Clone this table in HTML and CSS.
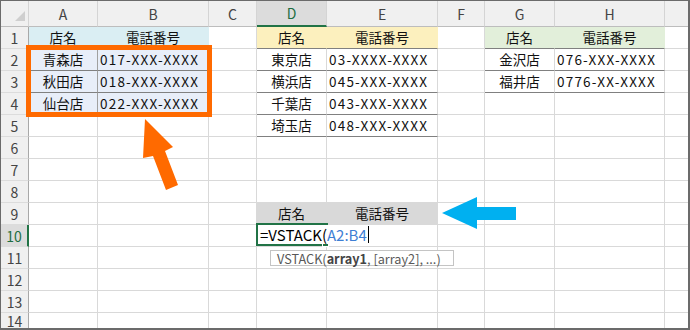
FILE: index.html
```html
<!DOCTYPE html>
<html lang="ja">
<head>
<meta charset="utf-8">
<title>VSTACK</title>
<link rel="stylesheet" href="styles.css">
</head>
<body>
<div class="sheet">
  <div class="grid">
    <div class="corner"><span class="tri"></span></div>
    <div class="ch">A</div><div class="ch">B</div><div class="ch">C</div><div class="ch act">D</div><div class="ch">E</div><div class="ch">F</div><div class="ch">G</div><div class="ch">H</div><div class="ch last"></div>

    <div class="rh">1</div>
    <div class="c ctr f-aqua">店名</div><div class="c ctr f-aqua">電話番号</div><div class="c"></div>
    <div class="c ctr f-yel bb">店名</div><div class="c ctr f-yel bb">電話番号</div><div class="c"></div>
    <div class="c ctr f-grn bb">店名</div><div class="c ctr f-grn bb">電話番号</div><div class="c last"></div>

    <div class="rh">2</div>
    <div class="c ctr f-sel bb vr">青森店</div><div class="c num f-sel bb">017-XXX-XXXX</div><div class="c"></div>
    <div class="c ctr bb">東京店</div><div class="c num bb">03-XXXX-XXXX</div><div class="c"></div>
    <div class="c ctr bb">金沢店</div><div class="c num bb">076-XXX-XXXX</div><div class="c last"></div>

    <div class="rh">3</div>
    <div class="c ctr f-sel bb vr">秋田店</div><div class="c num f-sel bb">018-XXX-XXXX</div><div class="c"></div>
    <div class="c ctr bb">横浜店</div><div class="c num bb">045-XXX-XXXX</div><div class="c"></div>
    <div class="c ctr bb">福井店</div><div class="c num bb">0776-XX-XXXX</div><div class="c last"></div>

    <div class="rh">4</div>
    <div class="c ctr f-sel bb vr">仙台店</div><div class="c num f-sel bb">022-XXX-XXXX</div><div class="c"></div>
    <div class="c ctr bb">千葉店</div><div class="c num bb">043-XXX-XXXX</div><div class="c"></div>
    <div class="c"></div><div class="c"></div><div class="c last"></div>

    <div class="rh">5</div>
    <div class="c"></div><div class="c"></div><div class="c"></div>
    <div class="c ctr bb">埼玉店</div><div class="c num bb">048-XXX-XXXX</div><div class="c"></div>
    <div class="c"></div><div class="c"></div><div class="c last"></div>

    <div class="rh">6</div>
    <div class="c"></div><div class="c"></div><div class="c"></div><div class="c"></div><div class="c"></div><div class="c"></div><div class="c"></div><div class="c"></div><div class="c last"></div>

    <div class="rh">7</div>
    <div class="c"></div><div class="c"></div><div class="c"></div><div class="c"></div><div class="c"></div><div class="c"></div><div class="c"></div><div class="c"></div><div class="c last"></div>

    <div class="rh">8</div>
    <div class="c"></div><div class="c"></div><div class="c"></div><div class="c"></div><div class="c"></div><div class="c"></div><div class="c"></div><div class="c"></div><div class="c last"></div>

    <div class="rh">9</div>
    <div class="c"></div><div class="c"></div><div class="c"></div>
    <div class="c ctr f-gray">店名</div><div class="c ctr f-gray">電話番号</div>
    <div class="c"></div><div class="c"></div><div class="c"></div><div class="c last"></div>

    <div class="rh act">10</div>
    <div class="c"></div><div class="c"></div><div class="c"></div><div class="c"></div><div class="c"></div><div class="c"></div><div class="c"></div><div class="c"></div><div class="c last"></div>

    <div class="rh">11</div>
    <div class="c"></div><div class="c"></div><div class="c"></div><div class="c"></div><div class="c"></div><div class="c"></div><div class="c"></div><div class="c"></div><div class="c last"></div>

    <div class="rh">12</div>
    <div class="c"></div><div class="c"></div><div class="c"></div><div class="c"></div><div class="c"></div><div class="c"></div><div class="c"></div><div class="c"></div><div class="c last"></div>

    <div class="rh">13</div>
    <div class="c"></div><div class="c"></div><div class="c"></div><div class="c"></div><div class="c"></div><div class="c"></div><div class="c"></div><div class="c"></div><div class="c last"></div>

    <div class="rh end">14</div>
    <div class="c end"></div><div class="c end"></div><div class="c end"></div><div class="c end"></div><div class="c end"></div><div class="c end"></div><div class="c end"></div><div class="c end"></div><div class="c end last"></div>
  </div>

  <div class="range-box"></div>

  <div class="active-cell"><span class="handle"></span></div>
  <div class="editor">=VSTACK(<span class="ref">A2:B4</span><span class="caret"></span></div>
  <div class="tip">VSTACK(<b>array1</b>, [array2], ...)</div>

  <svg class="arrow-up" width="690" height="330" viewBox="0 0 690 330">
    <polygon points="145,119 173,147 165,151 178,185 166,190 153,156 143,158" fill="#ff6a00"/>
  </svg>
  <svg class="arrow-left" width="690" height="330" viewBox="0 0 690 330">
    <polygon points="442,213 477,197 477,207 516,207 516,220 477,220 477,229" fill="#00b0f0"/>
  </svg>
</div>
</body>
</html>
```

FILE: styles.css
```css
html, body {
  margin: 0;
  padding: 0;
  background: #fff;
}

.sheet {
  position: relative;
  width: 690px;
  height: 330px;
  box-sizing: border-box;
  border-style: solid;
  border-color: #6b6b6b;
  border-width: 1px 2px 2px 1px;
  overflow: hidden;
  background: #fff;
  font-family: "Noto Sans CJK JP", "Noto Sans", sans-serif;
}

.grid {
  display: grid;
  grid-template-columns: 28px 69px 111px 48px 70px 111px 47px 70px 110px 1fr;
  grid-template-rows: 26px repeat(13, 22px) 1fr;
  height: 100%;
}

.grid > div {
  box-sizing: border-box;
  border-right: 1px solid #d9d9d9;
  border-bottom: 1px solid #d9d9d9;
  display: flex;
  align-items: center;
  white-space: nowrap;
  font-size: 13.5px;
  line-height: 1;
  color: #111;
  min-width: 0;
}

.grid > .last { border-right: none; }
.grid > .end {
  border-bottom: none;
  align-items: flex-start;
  padding-top: 1px;
}

.corner {
  background: #f0f0f0;
  border-right-color: #d4d4d4 !important;
  border-bottom-color: #bdbdbd !important;
  position: relative;
}
.tri {
  position: absolute;
  right: 3px;
  bottom: 5px;
  width: 0;
  height: 0;
  border-left: 10px solid transparent;
  border-bottom: 10px solid #cfcfcf;
}

.ch {
  background: #f0f0f0;
  justify-content: center;
  color: #444 !important;
  font-size: 14px !important;
  border-right-color: #d4d4d4 !important;
  border-bottom-color: #bdbdbd !important;
}
.ch.act {
  background: #dcdcdc;
  color: #1e6e42 !important;
  border-bottom: 2px solid #217346 !important;
}

.rh {
  background: #f0f0f0;
  justify-content: center;
  color: #444 !important;
  font-size: 14px !important;
  border-right-color: #a8a8a8 !important;
  border-bottom-color: #dcdcdc !important;
}
.rh.act {
  background: #dcdcdc;
  color: #1e6e42 !important;
  border-right: 2px solid #217346 !important;
}

.ctr { justify-content: center; }
.num {
  padding-left: 2px;
  letter-spacing: 1.2px;
}

.f-aqua { background: #daeef3; border-color: #daeef3 !important; }
.f-yel { background: #fcf0be; border-right-color: #fcf0be !important; }
.f-grn { background: #e2efda; border-right-color: #e2efda !important; }
.f-sel { background: #e8eef9; }
.f-gray { background: #d9d9d9; border-color: #d9d9d9 !important; }

.grid > .bb { border-bottom-color: #808080; }
.grid > .vr { border-right-color: #a0a0a0; }

.range-box {
  position: absolute;
  left: 25px;
  top: 44px;
  width: 186px;
  height: 72px;
  box-sizing: border-box;
  border: 5px solid #ff6a00;
}

.active-cell {
  position: absolute;
  left: 255px;
  top: 222px;
  width: 72px;
  height: 23px;
  box-sizing: border-box;
  border: 2px solid #217346;
}
.handle {
  position: absolute;
  right: -3px;
  bottom: -3px;
  width: 5px;
  height: 5px;
  background: #217346;
  border: 1px solid #fff;
}

.editor {
  position: absolute;
  left: 257px;
  top: 224px;
  height: 19px;
  padding-left: 2px;
  padding-right: 2px;
  background: #fff;
  display: flex;
  align-items: center;
  font-size: 15px;
  color: #000;
  white-space: nowrap;
}
.ref { color: #3f7fd4; }
.caret {
  display: inline-block;
  width: 1px;
  height: 17px;
  margin-left: 1px;
  background: #000;
}

.tip {
  position: absolute;
  left: 269px;
  top: 249px;
  width: 184px;
  height: 16px;
  box-sizing: border-box;
  border: 1px solid #c4c4c4;
  background: #fff;
  padding-left: 6px;
  display: flex;
  align-items: center;
  font-size: 12.7px;
  color: #585858;
  white-space: nowrap;
}
.tip b { color: #444; font-weight: 700; }

.arrow-up, .arrow-left {
  position: absolute;
  left: -1px;
  top: -1px;
  pointer-events: none;
}
```
